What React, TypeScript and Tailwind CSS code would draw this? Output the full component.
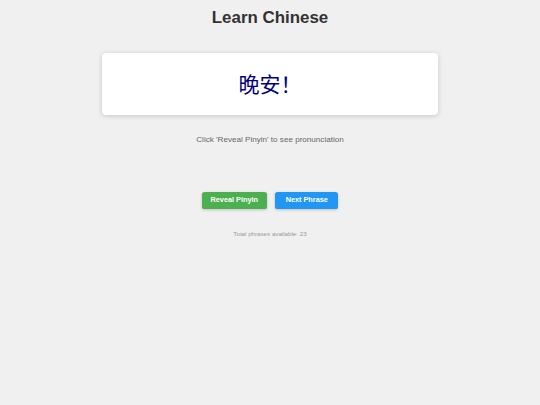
import React from "react";

export default function App() {
  return (
    <div
      className="min-h-[405px] w-full bg-[#f0f0f0] flex flex-col items-center"
      style={{ fontFamily: '"Liberation Sans", Arial, sans-serif' }}
    >
      <h1 className="pt-[8px] text-[16.9px] leading-[20px] font-bold text-[#333333]">
        Learn Chinese
      </h1>
      <div className="mt-[25px] w-[336px] h-[62px] bg-white rounded-[4px] shadow-[0_1px_5px_rgba(0,0,0,0.18)] flex items-center justify-center">
        <span
          className="mb-[3px] text-[21px] leading-[26px] text-[#000080]"
          style={{ fontFamily: '"Noto Sans CJK SC", "Noto Sans CJK JP", sans-serif' }}
        >
          晚安！
        </span>
      </div>
      <p className="mt-[19px] text-[8.1px] leading-[12px] text-[#666666]">
        Click 'Reveal Pinyin' to see pronunciation
      </p>
      <div className="mt-[46px] flex gap-[8.5px]">
        <button className="w-[65px] h-[17px] rounded-[2.6px] bg-[#4caf50] text-white text-[7.3px] font-bold shadow-[0_1px_3px_rgba(0,0,0,0.2)] flex items-center justify-center">
          Reveal Pinyin
        </button>
        <button className="w-[63px] h-[17px] rounded-[2.6px] bg-[#2196f3] text-white text-[7.3px] font-bold shadow-[0_1px_3px_rgba(0,0,0,0.2)] flex items-center justify-center">
          Next Phrase
        </button>
      </div>
      <p className="mt-[20px] text-[6.2px] leading-[10px] text-[#999999]">
        Total phrases available: 23
      </p>
    </div>
  );
}
